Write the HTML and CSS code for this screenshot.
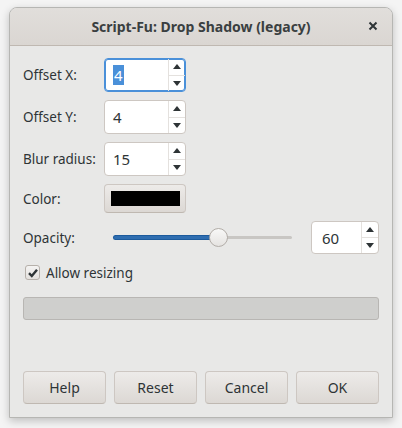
FILE: index.html
```html
<!DOCTYPE html>
<html>
<head>
<meta charset="utf-8">
<link rel="stylesheet" href="styles.css">
</head>
<body>
<div class="window">
  <div class="header">
    <div class="title">Script-Fu: Drop Shadow (legacy)</div>
    <div class="close"><svg width="10" height="10" viewBox="0 0 10 10"><path d="M1.5 1.5 L8.5 8.5 M8.5 1.5 L1.5 8.5" stroke="#2e3436" stroke-width="2" fill="none"/></svg></div>
  </div>
  <div class="content">
    <div class="form">
      <div class="label">Offset X:</div>
      <div class="spin focused">
        <div class="spin-text"><span class="sel">4</span></div>
        <div class="spin-btns">
          <div class="arrow up"></div>
          <div class="arrow down"></div>
        </div>
      </div>
      <div class="label">Offset Y:</div>
      <div class="spin">
        <div class="spin-text">4</div>
        <div class="spin-btns">
          <div class="arrow up"></div>
          <div class="arrow down"></div>
        </div>
      </div>
      <div class="label">Blur radius:</div>
      <div class="spin">
        <div class="spin-text">15</div>
        <div class="spin-btns">
          <div class="arrow up"></div>
          <div class="arrow down"></div>
        </div>
      </div>
      <div class="label">Color:</div>
      <div class="colorbtn"><div class="swatch"></div></div>
      <div class="label">Opacity:</div>
      <div class="opacity-row">
        <div class="slider">
          <div class="trough"><div class="fill"></div></div>
          <div class="knob"></div>
        </div>
        <div class="spin small">
          <div class="spin-text">60</div>
          <div class="spin-btns">
            <div class="arrow up"></div>
            <div class="arrow down"></div>
          </div>
        </div>
      </div>
    </div>
    <div class="check-row">
      <div class="checkbox"><svg width="12" height="12" viewBox="0 0 12 12"><path d="M2 6.2 L4.8 9 L10 2.8" stroke="#2e3436" stroke-width="2.4" fill="none"/></svg></div>
      <span>Allow resizing</span>
    </div>
    <div class="progress"></div>
    <div class="spacer"></div>
    <div class="buttons">
      <div class="btn">Help</div>
      <div class="btn">Reset</div>
      <div class="btn">Cancel</div>
      <div class="btn">OK</div>
    </div>
  </div>
</div>
</body>
</html>
```
FILE: styles.css
```css
html, body {
  margin: 0;
  padding: 0;
}
body {
  background: #f4f4f4;
  width: 402px;
  height: 428px;
  padding: 7px 9px 0 9px;
  box-sizing: border-box;
  font-family: "Noto Sans", "Open Sans", sans-serif;
  font-size: 13.5px;
  color: #2e3436;
}
.window {
  width: 384px;
  height: 411px;
  background: #e8e8e7;
  border: 1px solid #b6b6b3;
  border-radius: 8px 8px 0 0;
  box-sizing: border-box;
  box-shadow: 0 3px 9px rgba(0,0,0,0.22);
  display: flex;
  flex-direction: column;
  overflow: hidden;
}
.header {
  height: 37px;
  flex: none;
  background: linear-gradient(#e1dedb, #dad6d2);
  border-bottom: 1px solid #bfb8b1;
  display: flex;
  align-items: center;
  justify-content: center;
  position: relative;
}
.title {
  font-weight: bold;
  font-size: 14px;
  color: #3a3f41;
}
.close {
  position: absolute;
  right: 14px;
  top: 13px;
  width: 10px;
  height: 10px;
  display: flex;
}
.content {
  flex: 1;
  display: flex;
  flex-direction: column;
  padding: 12px 13px 13px 13px;
}
.form {
  display: grid;
  grid-template-columns: 81px 1fr;
  row-gap: 8px;
  align-items: center;
}
.spin {
  width: 82px;
  height: 34px;
  box-sizing: border-box;
  background: #ffffff;
  border: 1px solid #cdc7c2;
  border-radius: 4px;
  display: flex;
}
.spin.focused {
  border: 1px solid #4a90d9;
  box-shadow: inset 0 0 0 1px #4a90d9;
}
.spin-text {
  flex: 1;
  display: flex;
  align-items: center;
  padding-left: 8px;
  font-size: 15px;
  color: #2e3436;
}
.sel {
  background: #4a90d9;
  color: #ffffff;
  padding: 0 1px;
  line-height: 20px;
}
.spin-btns {
  width: 16px;
  border-left: 1px solid #e4e1de;
  display: flex;
  flex-direction: column;
}
.arrow {
  flex: 1;
  display: flex;
  align-items: center;
  justify-content: center;
}
.arrow.down {
  border-top: 1px solid #e4e1de;
}
.arrow::after {
  content: "";
  width: 0;
  height: 0;
  border-left: 4px solid transparent;
  border-right: 4px solid transparent;
}
.arrow.up::after {
  border-bottom: 5px solid #2e3436;
}
.arrow.down::after {
  border-top: 5px solid #2e3436;
}
.colorbtn {
  width: 82px;
  height: 29px;
  box-sizing: border-box;
  border: 1px solid #cdc7c2;
  border-bottom-color: #bfb8b1;
  border-radius: 4px;
  background: linear-gradient(#edebe9, #dcd8d4);
  display: flex;
  align-items: center;
  justify-content: center;
}
.swatch {
  width: 69px;
  height: 15px;
  background: #000;
}
.opacity-row {
  display: flex;
  align-items: center;
  margin-left: 10px;
}
.slider {
  width: 178px;
  height: 22px;
  position: relative;
  display: flex;
  align-items: center;
}
.trough {
  width: 100%;
  height: 3px;
  border-radius: 2px;
  background: #c8c6c3;
}
.fill {
  width: 104px;
  height: 3px;
  border-radius: 2px;
  background: #2e6db0;
  box-shadow: 0 0 0 1px #1c5a9c;
}
.knob {
  position: absolute;
  left: 95px;
  top: 1px;
  width: 19px;
  height: 19px;
  box-sizing: border-box;
  border-radius: 50%;
  border: 1px solid #b2ada8;
  background: linear-gradient(#f8f8f7, #e5e3e1);
}
.spin.small {
  width: 68px;
  height: 33px;
  margin-left: 19px;
}
.spin.small .spin-text {
  padding-left: 10px;
}
.check-row {
  display: flex;
  align-items: center;
  margin-top: 10px;
  margin-left: 2px;
  height: 17px;
}
.checkbox {
  width: 15px;
  height: 15px;
  box-sizing: border-box;
  border: 1px solid #b6b0aa;
  border-radius: 3px;
  background: linear-gradient(#f4f3f2, #e4e1de);
  display: flex;
  align-items: center;
  justify-content: center;
  margin-right: 6px;
}
.progress {
  margin-top: 16px;
  height: 23px;
  box-sizing: border-box;
  border: 1px solid #b8b6b3;
  border-radius: 3px;
  background: #cfcfcd;
}
.spacer {
  flex: 1;
}
.buttons {
  display: flex;
  gap: 8px;
}
.btn {
  flex: 1;
  height: 33px;
  box-sizing: border-box;
  border: 1px solid #cdc7c2;
  border-bottom-color: #bfb8b1;
  border-radius: 4px;
  background: linear-gradient(#edebe9, #dcd8d4);
  display: flex;
  align-items: center;
  justify-content: center;
  font-size: 14px;
  color: #2e3436;
}
```
